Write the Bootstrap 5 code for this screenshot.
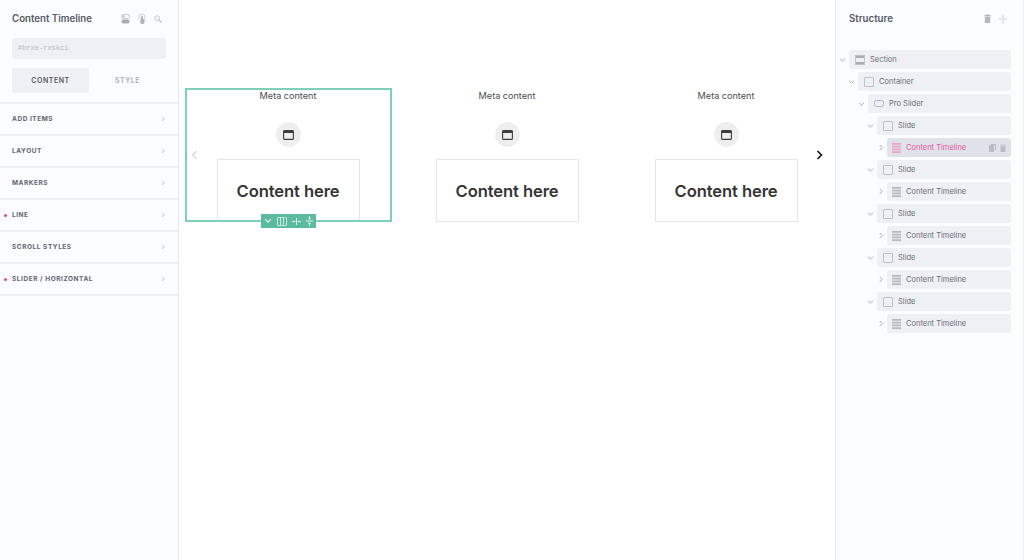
<!DOCTYPE html>
<html lang="en">
<head>
<meta charset="utf-8">
<title>Content Timeline</title>
<link href="https://cdn.jsdelivr.net/npm/bootstrap@5.3.0/dist/css/bootstrap.min.css" rel="stylesheet">
<style>
html,body{height:100%;overflow:hidden}
body{font-family:Inter,"Liberation Sans",sans-serif;background:#fff;color:#3a3a3a}
.shell{width:1024px;height:560px}
.panel-l{width:179px;background:#fbfcff;border-right:1px solid #e6e8ee;flex:none}
.panel-r{width:189px;background:#fbfcff;border-left:1px solid #e6e8ee;border-right:1px solid #eef0f4;flex:none}
.p-title{font-size:9.7px;font-weight:600;color:#555962;line-height:1}
.head-l{height:38px;padding:0 16px 0 12px}
.id-box{height:21px;margin:0 12px;background:#eff0f5;border-radius:3px;padding-left:6px;font-family:"Liberation Mono",monospace;font-size:7px;color:#b5b8c0;line-height:21px}
.tabs{margin:9px 12px 9px;height:25px}
.tab-item{flex:1;font-size:7px;font-weight:600;letter-spacing:.55px;border-radius:3px;color:#a9adb5;padding-top:2px}
.tab-item.on{background:#eff0f5;color:#555962}
.sec-list{border-top:2px solid #eef0f4}
.sec-row{height:32px;border-bottom:2px solid #eef0f4;padding:2px 13px 0 12px;font-size:6.5px;font-weight:700;letter-spacing:.55px;color:#60646d;position:relative}
.sec-row svg{margin-bottom:2px}
.dot{position:absolute;left:4px;top:14px;width:3px;height:3px;border-radius:50%;background:#ea3f8c}
.canvas{flex:1;position:relative;padding:88px 7px 0 6px;min-width:0}
.slides{gap:13px}
.tl-slide{width:206px;height:134px;flex:none}
.meta{font-size:9.1px;line-height:16px;color:#4c4c4c;text-align:center}
.mark-circle{width:25px;height:25px;border-radius:50%;background:#eeeeee;margin:18px auto 12px}
.tl-card{width:143px;height:63px;margin:0 auto;padding-top:2px;border:1px solid #e6e6e6;font-size:16.6px;font-weight:600;color:#363636;letter-spacing:-.1px;background:#fff}
.sel-frame{position:absolute;left:6px;top:88px;width:207px;height:134px;border:2px solid #7dd0ba;pointer-events:none}
.sel-bar{position:absolute;left:82px;top:214px;width:55px;height:14px;background:#5bbba1;gap:5px}
.arrow-l{position:absolute;left:12px;top:150px}
.arrow-r{position:absolute;left:637px;top:150px}
.head-r{height:37px;padding:0 16px 0 13px;margin-bottom:13px}
.tree{font-size:7.5px;color:#6a6e77}
.t-line{height:19px;margin-bottom:3px;margin-right:12px}
.t-caret{width:13px;flex:none}
.t-box{flex:1;background:#eff0f5;border-radius:3px;height:19px;padding-left:6px;gap:5px;min-width:0}
.t-box.act{background:#dfe2e9;color:#e5559b}
.t-ico{width:10px;flex:none}
.i1{padding-left:9px}.i2{padding-left:19px}.i3{padding-left:28px}.i4{padding-left:38px}
.i4 .t-box{padding-left:5px}
.i4 .t-ico{width:9px}
.end-ico{margin-left:auto;padding-right:5px;gap:4px}
</style>
</head>
<body>
<svg width="0" height="0" class="d-none">
  <symbol id="s-right" viewBox="0 0 4 6"><path d="M1 .8 3.200 3 1 5.200" fill="none" stroke="#b9bcc3"/></symbol>
  <symbol id="s-cal" viewBox="0 0 11 10"><rect x=".6" y=".6" width="9.800" height="8.800" rx="1" fill="none" stroke="#3d3d3d" stroke-width="1.100"/><rect x=".6" y=".6" width="9.800" height="2.400" fill="#3d3d3d"/></symbol>
  <symbol id="s-down" viewBox="0 0 7 4"><path d="M1 .8 3.500 3.200 6 .8" fill="none" stroke="#a8abb2"/></symbol>
  <symbol id="s-side" viewBox="0 0 4 7"><path d="M.8 1 3.200 3.500 .8 6" fill="none" stroke="#a8abb2"/></symbol>
  <symbol id="s-box" viewBox="0 0 10 10"><rect x=".5" y=".5" width="9" height="9" rx=".5" fill="none" stroke="#bfc2c8"/></symbol>
  <symbol id="s-rows" viewBox="0 0 10 11"><path d="M0 0h10v2H0zM0 3h10v2H0zM0 6h10v2H0zM0 9h10v2H0z" fill="#b4b7be"/></symbol>
  <symbol id="s-rows-p" viewBox="0 0 10 11"><path d="M0 0h10v2H0zM0 3h10v2H0zM0 6h10v2H0zM0 9h10v2H0z" fill="#eda3c6"/></symbol>
</svg>
<div class="shell d-flex">
  <aside class="panel-l d-flex flex-column">
    <div class="head-l d-flex align-items-center justify-content-between">
      <span class="p-title">Content Timeline</span>
      <span class="d-flex align-items-center gap-2">
        <svg width="9" height="12" viewBox="0 0 10 12"><rect x=".5" y="1" width="9" height="4.500" rx="2.200" fill="none" stroke="#c0c3c9"/><rect x=".5" y="6.500" width="9" height="4.500" rx="2.200" fill="#a9acb3"/><circle cx="3" cy="3.200" r="1.300" fill="#c0c3c9"/></svg>
        <svg width="8" height="12" viewBox="0 0 9 12"><circle cx="4.500" cy="4" r="3.600" fill="none" stroke="#c0c3c9" stroke-width=".8"/><path d="M3.400 3.500a1.100 1.100 0 0 1 2.200 0V6l1.700.6V10L6 11.500H3.500L1.800 8l1.600.3z" fill="#b0b3ba"/></svg>
        <svg width="8" height="8" viewBox="0 0 10 10"><circle cx="4" cy="4" r="3" fill="none" stroke="#bfc2c8" stroke-width="1.200"/><path d="M6.200 6.200 9.400 9.400" stroke="#bfc2c8" stroke-width="1.500"/></svg>
      </span>
    </div>
    <div class="id-box">#brxe-rxskci</div>
    <div class="tabs d-flex">
      <div class="tab-item on d-flex align-items-center justify-content-center">CONTENT</div>
      <div class="tab-item d-flex align-items-center justify-content-center">STYLE</div>
    </div>
    <div class="sec-list">
      <div class="sec-row d-flex align-items-center justify-content-between">ADD ITEMS<svg width="4" height="6"><use href="#s-right"/></svg></div>
      <div class="sec-row d-flex align-items-center justify-content-between">LAYOUT<svg width="4" height="6"><use href="#s-right"/></svg></div>
      <div class="sec-row d-flex align-items-center justify-content-between">MARKERS<svg width="4" height="6"><use href="#s-right"/></svg></div>
      <div class="sec-row d-flex align-items-center justify-content-between"><i class="dot"></i>LINE<svg width="4" height="6"><use href="#s-right"/></svg></div>
      <div class="sec-row d-flex align-items-center justify-content-between">SCROLL STYLES<svg width="4" height="6"><use href="#s-right"/></svg></div>
      <div class="sec-row d-flex align-items-center justify-content-between"><i class="dot"></i>SLIDER / HORIZONTAL<svg width="4" height="6"><use href="#s-right"/></svg></div>
    </div>
  </aside>

  <main class="canvas">
    <div class="slides d-flex">
      <div class="tl-slide">
        <div class="meta">Meta content</div>
        <div class="mark-circle d-flex align-items-center justify-content-center"><svg width="11" height="10"><use href="#s-cal"/></svg></div>
        <div class="tl-card d-flex align-items-center justify-content-center">Content here</div>
      </div>
      <div class="tl-slide">
        <div class="meta">Meta content</div>
        <div class="mark-circle d-flex align-items-center justify-content-center"><svg width="11" height="10"><use href="#s-cal"/></svg></div>
        <div class="tl-card d-flex align-items-center justify-content-center">Content here</div>
      </div>
      <div class="tl-slide">
        <div class="meta">Meta content</div>
        <div class="mark-circle d-flex align-items-center justify-content-center"><svg width="11" height="10"><use href="#s-cal"/></svg></div>
        <div class="tl-card d-flex align-items-center justify-content-center">Content here</div>
      </div>
    </div>
    <div class="sel-frame"></div>
    <div class="sel-bar d-flex align-items-center justify-content-center">
      <svg width="8" height="6" viewBox="0 0 8 6"><path d="M1 1.200 4 4.200 7 1.200" fill="none" stroke="#e6f6f1" stroke-width="1.100"/></svg>
      <svg width="10" height="9" viewBox="0 0 10 9"><rect x=".5" y=".5" width="9" height="8" rx=".5" fill="none" stroke="#d4f0e8" stroke-width=".9"/><path d="M3.500 .5v8M6.500 .5v8" stroke="#d4f0e8" stroke-width=".9"/></svg>
      <svg width="9" height="7" viewBox="0 0 9 7"><path d="M4.500 0v7" stroke="#e6f6f1"/><path d="M0 3.500h2.500M6.500 3.500H9" stroke="#e6f6f1"/><path d="M3.500 3.500 1.800 2.200v2.600zM5.500 3.500 7.200 2.200v2.600z" fill="#e6f6f1"/></svg>
      <svg width="7" height="10" viewBox="0 0 7 10"><path d="M0 5h7" stroke="#e6f6f1"/><path d="M3.500 0v2M3.500 8v2" stroke="#e6f6f1"/><path d="M3.500 4 2.200 2h2.600zM3.500 6 2.200 8h2.600z" fill="#e6f6f1"/></svg>
    </div>
    <svg class="arrow-l" width="7" height="10" viewBox="0 0 7 10"><path d="M5.500 1 1.500 5l4 4" fill="none" stroke="#d3d5d8" stroke-width="1.200"/></svg>
    <svg class="arrow-r" width="7" height="10" viewBox="0 0 7 10"><path d="M1.500 1l4 4-4 4" fill="none" stroke="#111" stroke-width="1.600"/></svg>
  </main>

  <aside class="panel-r d-flex flex-column">
    <div class="head-r d-flex align-items-center justify-content-between">
      <span class="p-title">Structure</span>
      <span class="d-flex align-items-center gap-2">
        <svg width="7" height="9" viewBox="0 0 7 9"><path d="M0 1.200h7v1H0zM2.200.2h2.600v1H2.200zM.8 2.700h5.400V9H.8z" fill="#b4b7be"/></svg>
        <svg width="8" height="10" viewBox="0 0 8 10"><path d="M0 5h8" stroke="#cfd1d6"/><path d="M4 0v2M4 8v2" stroke="#cfd1d6"/><path d="M4 4 2.800 2h2.400zM4 6 2.800 8h2.400z" fill="#cfd1d6"/></svg>
      </span>
    </div>
    <div class="tree">
      <div class="t-line d-flex align-items-center">
        <span class="t-caret d-flex justify-content-center"><svg width="7" height="4"><use href="#s-down"/></svg></span>
        <div class="t-box d-flex align-items-center"><svg class="t-ico" width="10" height="10" viewBox="0 0 10 10"><rect x=".5" y=".5" width="9" height="9" fill="none" stroke="#bfc2c8"/><path d="M1 1h8v2H1zM1 7h8v2H1z" fill="#a9acb3"/></svg><span>Section</span></div>
      </div>
      <div class="t-line d-flex align-items-center i1">
        <span class="t-caret d-flex justify-content-center"><svg width="7" height="4"><use href="#s-down"/></svg></span>
        <div class="t-box d-flex align-items-center"><svg class="t-ico" width="10" height="10"><use href="#s-box"/></svg><span>Container</span></div>
      </div>
      <div class="t-line d-flex align-items-center i2">
        <span class="t-caret d-flex justify-content-center"><svg width="7" height="4"><use href="#s-down"/></svg></span>
        <div class="t-box d-flex align-items-center"><svg class="t-ico" width="10" height="7" viewBox="0 0 10 7"><rect x=".5" y=".5" width="9" height="6" rx="2" fill="none" stroke="#b0b3ba"/></svg><span>Pro Slider</span></div>
      </div>
      <div class="t-line d-flex align-items-center i3">
        <span class="t-caret d-flex justify-content-center"><svg width="7" height="4"><use href="#s-down"/></svg></span>
        <div class="t-box d-flex align-items-center"><svg class="t-ico" width="10" height="10"><use href="#s-box"/></svg><span>Slide</span></div>
      </div>
      <div class="t-line d-flex align-items-center i4">
        <span class="t-caret d-flex justify-content-center"><svg width="4" height="7"><use href="#s-side"/></svg></span>
        <div class="t-box act d-flex align-items-center"><svg class="t-ico" width="9" height="10"><use href="#s-rows-p"/></svg><span>Content Timeline</span><span class="end-ico d-flex align-items-center"><svg width="7" height="8" viewBox="0 0 7 8"><path d="M0 1h5v7H0z" fill="#b9bcc3"/><path d="M2 0h5v6H6V1H2z" fill="#b9bcc3"/></svg><svg width="6" height="8" viewBox="0 0 6 8"><path d="M0 .8h6v.8H0zM.6 2.200h4.800V8H.6z" fill="#b9bcc3"/></svg></span></div>
      </div>
      <div class="t-line d-flex align-items-center i3">
        <span class="t-caret d-flex justify-content-center"><svg width="7" height="4"><use href="#s-down"/></svg></span>
        <div class="t-box d-flex align-items-center"><svg class="t-ico" width="10" height="10"><use href="#s-box"/></svg><span>Slide</span></div>
      </div>
      <div class="t-line d-flex align-items-center i4">
        <span class="t-caret d-flex justify-content-center"><svg width="4" height="7"><use href="#s-side"/></svg></span>
        <div class="t-box d-flex align-items-center"><svg class="t-ico" width="9" height="10"><use href="#s-rows"/></svg><span>Content Timeline</span></div>
      </div>
      <div class="t-line d-flex align-items-center i3">
        <span class="t-caret d-flex justify-content-center"><svg width="7" height="4"><use href="#s-down"/></svg></span>
        <div class="t-box d-flex align-items-center"><svg class="t-ico" width="10" height="10"><use href="#s-box"/></svg><span>Slide</span></div>
      </div>
      <div class="t-line d-flex align-items-center i4">
        <span class="t-caret d-flex justify-content-center"><svg width="4" height="7"><use href="#s-side"/></svg></span>
        <div class="t-box d-flex align-items-center"><svg class="t-ico" width="9" height="10"><use href="#s-rows"/></svg><span>Content Timeline</span></div>
      </div>
      <div class="t-line d-flex align-items-center i3">
        <span class="t-caret d-flex justify-content-center"><svg width="7" height="4"><use href="#s-down"/></svg></span>
        <div class="t-box d-flex align-items-center"><svg class="t-ico" width="10" height="10"><use href="#s-box"/></svg><span>Slide</span></div>
      </div>
      <div class="t-line d-flex align-items-center i4">
        <span class="t-caret d-flex justify-content-center"><svg width="4" height="7"><use href="#s-side"/></svg></span>
        <div class="t-box d-flex align-items-center"><svg class="t-ico" width="9" height="10"><use href="#s-rows"/></svg><span>Content Timeline</span></div>
      </div>
      <div class="t-line d-flex align-items-center i3">
        <span class="t-caret d-flex justify-content-center"><svg width="7" height="4"><use href="#s-down"/></svg></span>
        <div class="t-box d-flex align-items-center"><svg class="t-ico" width="10" height="10"><use href="#s-box"/></svg><span>Slide</span></div>
      </div>
      <div class="t-line d-flex align-items-center i4">
        <span class="t-caret d-flex justify-content-center"><svg width="4" height="7"><use href="#s-side"/></svg></span>
        <div class="t-box d-flex align-items-center"><svg class="t-ico" width="9" height="10"><use href="#s-rows"/></svg><span>Content Timeline</span></div>
      </div>
    </div>
  </aside>
</div>
<script src="https://cdn.jsdelivr.net/npm/bootstrap@5.3.0/dist/js/bootstrap.bundle.min.js"></script>
</body>
</html>
